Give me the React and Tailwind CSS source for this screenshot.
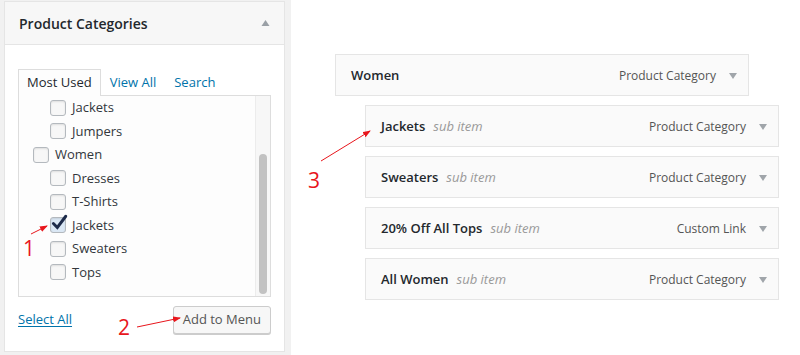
import { useState } from 'react';

const items = [
  { label: 'Jackets', sub: true },
  { label: 'Jumpers', sub: true },
  { label: 'Women', sub: false },
  { label: 'Dresses', sub: true },
  { label: 'T-Shirts', sub: true },
  { label: 'Jackets', sub: true, checked: true },
  { label: 'Sweaters', sub: true },
  { label: 'Tops', sub: true },
];

const menuItems = [
  { name: 'Women', type: 'Product Category', top: true },
  { name: 'Jackets', type: 'Product Category' },
  { name: 'Sweaters', type: 'Product Category' },
  { name: '20% Off All Tops', type: 'Custom Link' },
  { name: 'All Women', type: 'Product Category' },
];

const Checkbox = ({ checked }) => (
  <span
    className={`relative w-4 h-4 shrink-0 rounded-[3px] border border-[#b4b9be] shadow-[inset_0_1px_2px_rgba(0,0,0,0.1)] ${
      checked ? 'bg-[#dbe8f5]' : 'bg-[#f7f7f7]'
    }`}
  >
    {checked && (
      <svg viewBox="0 0 16 16" className="absolute -left-[1px] -top-[4px] w-[18px] h-[18px]">
        <path d="M3 8.5 L6.5 12 L14 2" fill="none" stroke="#1d2b4a" strokeWidth="2.6" strokeLinecap="round" />
      </svg>
    )}
  </span>
);

const Caret = () => (
  <svg viewBox="0 0 8 6" className="w-[8px] h-[6px] ml-[13px]">
    <path d="M0 0 L8 0 L4 6 Z" fill="#a0a5aa" />
  </svg>
);

const App = () => {
  const [tab] = useState('most');

  return (
    <div
      className="relative flex w-[800px] h-[355px] bg-white overflow-hidden"
      style={{ fontFamily: '"Open Sans", "Liberation Sans", sans-serif' }}
    >
      {/* left metabox column */}
      <div className="w-[291px] h-full bg-[#f1f1f1] pl-[4px] pt-[1px]">
        <div className="w-[281px] h-[351px] bg-white border border-[#e5e5e5]">
          <div className="h-[43px] flex items-center justify-between pl-[14px] pr-[14px] bg-[#f7f7f7] border-b border-[#e5e5e5]">
            <span className="text-[14px] font-semibold text-[#23282d]">Product Categories</span>
            <svg viewBox="0 0 8 6" className="w-[9px] h-[6px]">
              <path d="M0 6 L8 6 L4 0 Z" fill="#9aa0a6" />
            </svg>
          </div>

          <div className="pl-[13px] pr-[13px] pt-[24px]">
            <div className="flex text-[13px] leading-[24px]">
              <span
                className={`px-[8px] border border-b-0 border-[#dddddd] bg-[#fdfdfd] text-[#23282d] relative -mb-px ${
                  tab === 'most' ? 'z-10' : ''
                }`}
              >
                Most Used
              </span>
              <span className="px-[8px] border border-transparent text-[#0073aa]">View All</span>
              <span className="px-[8px] border border-transparent text-[#0073aa]">Search</span>
            </div>

            <div className="relative h-[202px] border border-[#dddddd] bg-[#fdfdfd] flex">
              <div className="flex-1 flex flex-col">
                {items.map((item, i) => (
                  <div
                    key={i}
                    className={`h-[23.5px] flex items-center gap-[6px] text-[13px] text-[#32373c] ${
                      item.sub ? 'pl-[31px]' : 'pl-[14px]'
                    }`}
                  >
                    <Checkbox checked={item.checked} />
                    <span>{item.label}</span>
                  </div>
                ))}
              </div>
              <div className="w-[15px] h-full bg-[#f7f7f7] border-l border-[#ececec] flex flex-col justify-end items-center pb-[2px]">
                <div className="w-[8px] h-[140px] rounded-full bg-[#c2c2c2]" />
              </div>
            </div>

            <div className="flex items-center justify-between mt-[9px]">
              <a className="text-[13px] text-[#0073aa] underline underline-offset-2">Select All</a>
              <button className="h-[28px] px-[9px] text-[13px] text-[#555] bg-[#f7f7f7] border border-[#cccccc] rounded-[3px] shadow-[0_1px_0_#cccccc]">
                Add to Menu
              </button>
            </div>
          </div>
        </div>
      </div>

      {/* menu structure */}
      <div className="flex-1 pl-[44px] pt-[54px] flex flex-col gap-[9px]">
        {menuItems.map((m, i) => (
          <div
            key={i}
            className={`w-[414px] h-[42px] flex items-center justify-between pl-[15px] pr-[11px] bg-[#fafafa] border border-[#e5e5e5] text-[13px] ${
              m.top ? '' : 'ml-[30px]'
            }`}
          >
            <div className="flex items-center gap-[8px] pt-px">
              <span className="font-semibold text-[#23282d]">{m.name}</span>
              {!m.top && <span className="italic text-[#999]">sub item</span>}
            </div>
            <div className="flex items-center text-[12px] text-[#555] pt-px">
              <span>{m.type}</span>
              <Caret />
            </div>
          </div>
        ))}
      </div>

      {/* red annotations */}
      <svg className="absolute inset-0 pointer-events-none" width="800" height="355">
        <defs>
          <marker id="ah" markerWidth="8" markerHeight="6" refX="7" refY="3" orient="auto">
            <path d="M0 0 L8 3 L0 6 Z" fill="#e8161c" />
          </marker>
        </defs>
        <line x1="31" y1="234" x2="47" y2="226" stroke="#e8161c" strokeWidth="1" markerEnd="url(#ah)" />
        <line x1="137" y1="327" x2="180" y2="318" stroke="#e8161c" strokeWidth="1" markerEnd="url(#ah)" />
        <line x1="321" y1="161" x2="370" y2="131" stroke="#e8161c" strokeWidth="1" markerEnd="url(#ah)" />
      </svg>
      <span className="absolute left-[23px] top-[236px] text-[21px] leading-[24px] text-[#e8161c]">1</span>
      <span className="absolute left-[118px] top-[315px] text-[21px] leading-[24px] text-[#e8161c]">2</span>
      <span className="absolute left-[308px] top-[168px] text-[21px] leading-[24px] text-[#e8161c]">3</span>
    </div>
  );
};

export default App;
